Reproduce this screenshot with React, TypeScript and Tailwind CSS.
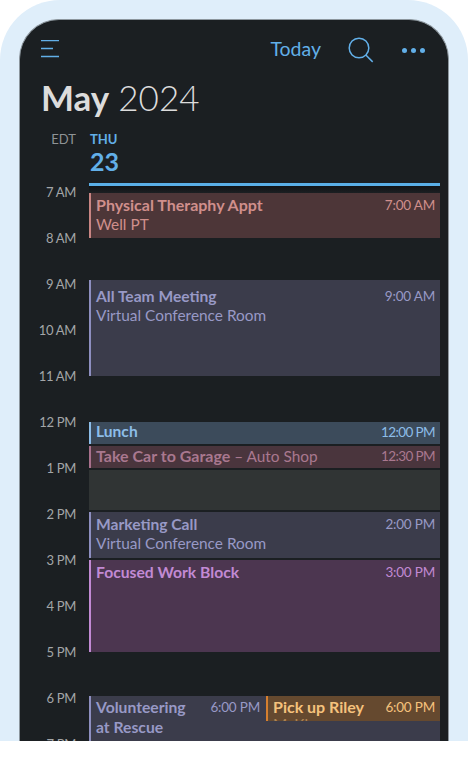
const hours = ["7 AM", "8 AM", "9 AM", "10 AM", "11 AM", "12 PM", "1 PM", "2 PM", "3 PM", "4 PM", "5 PM", "6 PM", "7 PM"];

function Hamburger() {
  return (
    <svg width="20" height="20" viewBox="0 0 20 20" fill="none" stroke="#62afe8" strokeWidth="1.3">
      <path d="M1 .5h18M1 8.5h12M1 16.5h18" />
    </svg>
  );
}

function Search() {
  return (
    <svg width="26" height="26" viewBox="0 0 26 26" fill="none" stroke="#62afe8" strokeWidth="1.5">
      <circle cx="11" cy="11" r="9.8" />
      <path d="M17.8 18l6.9 6.9" />
    </svg>
  );
}

export default function App() {
  return (
    <div className="h-[780px] w-[468px] overflow-hidden bg-white font-['Lato','Liberation_Sans',sans-serif]">
      <div className="h-[741px] rounded-t-[60px] bg-[#dfeefa] px-[19px] pt-[19px]">
        <div className="h-[722px] overflow-hidden rounded-t-[40px] border-x border-t border-x-[#8d979e] border-t-[#8d979e] bg-[#1b1f22]">
          <div className="flex h-[58px] items-center pl-[20px] pr-[23px] pt-[2px]">
            <Hamburger />
            <span className="ml-auto -translate-y-px text-[19.5px] text-[#62afe8]">Today</span>
            <span className="ml-[27px] flex"><Search /></span>
            <span className="ml-[28px] flex gap-[4px]">
              <i className="h-[5px] w-[5px] rounded-full bg-[#62afe8]" />
              <i className="h-[5px] w-[5px] rounded-full bg-[#62afe8]" />
              <i className="h-[5px] w-[5px] rounded-full bg-[#62afe8]" />
            </span>
          </div>
          <div className="ml-[21px] h-[49px] text-[35px] leading-[39px] text-[#dcdcdc]">
            <span className="font-bold">May</span> <span className="font-light">2024</span>
          </div>
          <div className="flex h-[57px]">
            <div className="w-[56px] pt-[3px] text-right text-[13px] leading-[18px] text-[#8f9396]">EDT</div>
            <div className="ml-[14px] pt-[3px] text-[#62afe8]">
              <div className="text-[13px] font-bold leading-[18px]">THU</div>
              <div className="text-[25px] font-bold leading-[26px]">23</div>
            </div>
          </div>
          <div className="flex">
            <div className="-mt-px w-[56px]">
              {hours.map((h) => (
                <div key={h} className="h-[46px] whitespace-nowrap text-right text-[13px] leading-[18px] tracking-[-0.3px] text-[#a3a6a8]">{h}</div>
              ))}
            </div>
            <div className="relative ml-[13px] w-[351px]">
              <div className="-mt-[1px] h-[3px] bg-[#5aaee6]" />
              <div className="h-[7px] bg-gradient-to-b from-[#111315] to-[#1b1f22]" />
              <div className="flex h-[45px] justify-between border-l-[2.5px] border-[#c98583] bg-[#4d3638] px-[5px] pt-[2px] text-[#d08f8c]">
                <div>
                  <div className="text-[16px] font-bold leading-[20px]">Physical Theraphy Appt</div>
                  <div className="text-[15.4px] leading-[19px]">Well PT</div>
                </div>
                <div className="text-[13.5px] leading-[20px] tracking-[-0.2px]">7:00 AM</div>
              </div>
              <div className="mt-[42px] flex h-[96px] justify-between border-l-[2.5px] border-[#8e8fc0] bg-[#3b3c4b] px-[5px] pt-[6px] text-[#9899c6]">
                <div>
                  <div className="text-[15.6px] font-bold leading-[20px]">All Team Meeting</div>
                  <div className="text-[15.4px] leading-[19px]">Virtual Conference Room</div>
                </div>
                <div className="text-[13.5px] leading-[20px] tracking-[-0.2px]">9:00 AM</div>
              </div>
              <div className="mt-[46px] flex h-[22px] justify-between border-l-[2.5px] border-[#8dbde8] bg-[#3c4b5b] pl-[5px] pr-[5px] text-[#8dbde8]">
                <div className="text-[15.6px] font-bold leading-[19px]">Lunch</div>
                <div className="text-[13.5px] leading-[20px] tracking-[-0.6px]">12:00 PM</div>
              </div>
              <div className="mt-[2px] flex h-[22px] justify-between border-l-[2.5px] border-[#a8708c] bg-[#4a353d] pl-[5px] pr-[5px] text-[#a9788f]">
                <div className="text-[15.4px] leading-[19px]"><span className="text-[16px] font-bold">Take Car to Garage</span> – Auto Shop</div>
                <div className="text-[13.5px] leading-[20px] tracking-[-0.6px]">12:30 PM</div>
              </div>
              <div className="mt-[2px] h-[40px] bg-[#303434]" />
              <div className="mt-[2px] flex h-[46px] justify-between border-l-[2.5px] border-[#8e8fc0] bg-[#3b3c4b] px-[5px] pt-[2px] text-[#9899c6]">
                <div>
                  <div className="text-[15.6px] font-bold leading-[20px]">Marketing Call</div>
                  <div className="text-[15.4px] leading-[19px]">Virtual Conference Room</div>
                </div>
                <div className="text-[13.5px] leading-[20px] tracking-[-0.2px]">2:00 PM</div>
              </div>
              <div className="mt-[2px] flex h-[92px] justify-between border-l-[2.5px] border-[#c28ad4] bg-[#4c3650] px-[5px] pt-[2px] text-[#c28ad4]">
                <div className="text-[15.7px] font-bold leading-[20px]">Focused Work Block</div>
                <div className="text-[13.5px] leading-[20px] tracking-[-0.2px]">3:00 PM</div>
              </div>
              <div className="relative mt-[44px] h-[92px] border-l-[2.5px] border-[#8e8fc0] bg-[#3b3c4b] text-[#9899c6]">
                <div className="flex w-[175px] justify-between pl-[5px] pr-[6px] pt-[1px]">
                  <div className="text-[15.7px] font-bold leading-[20px]">Volunteering<br />at Rescue</div>
                  <div className="text-[13.5px] leading-[20px] tracking-[-0.2px]">6:00 PM</div>
                </div>
                <div className="absolute left-[175px] right-0 top-0 flex h-[25px] justify-between overflow-hidden border-l-[2.5px] border-[#d57f2f] bg-[#65492f] px-[5px] pt-[1px] text-[#f5c27d]">
                  <div>
                    <div className="text-[16px] font-bold leading-[20px]">Pick up Riley</div>
                    <div className="-mt-[2px] text-[15.4px] leading-[19px] opacity-50">McKlaren</div>
                  </div>
                  <div className="text-[13.5px] leading-[20px] tracking-[-0.2px]">6:00 PM</div>
                </div>
              </div>
            </div>
          </div>
        </div>
      </div>
    </div>
  );
}
